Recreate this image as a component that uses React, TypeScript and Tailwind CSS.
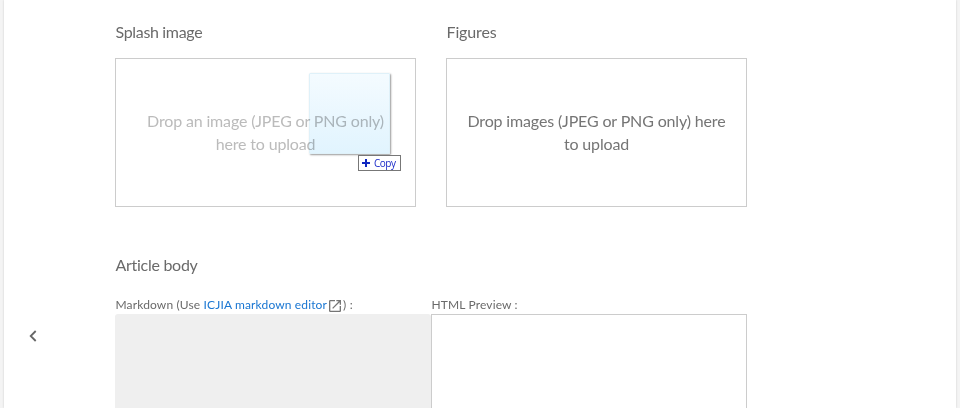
export default function App() {
  return (
    <div className="h-[408px] w-[960px] overflow-hidden bg-[#f4f4f4] pl-[4px] pr-[4px] font-['Lato',sans-serif] text-[#6a6a6a]">
      <div className="flex h-full bg-white shadow-[0_0_2px_#ccc]">
        <div className="flex w-[111px] shrink-0 pl-[25px] pt-[330px]">
          <svg width="8" height="12" viewBox="0 0 8 12" fill="none" stroke="#666" strokeWidth="1.8"><path d="M6.7 1 1.7 6l5 5" /></svg>
        </div>
        <main className="w-[632px] shrink-0">
          <div className="grid grid-cols-[301px_301px] gap-[30px]">
            <section>
              <h2 className="h-[58px] pl-[0.5px] pt-[20px] text-[16px] leading-[24px] tracking-[-0.33px]">Splash image</h2>
              <div className="relative flex h-[149px] items-center justify-center border border-[#ccc] pb-[2px] text-center text-[16px] leading-[23px] tracking-[-0.16px] text-[#bbb]">
                <p>Drop an image (JPEG or PNG only)<br />here to upload</p>
                <div className="absolute left-[193px] top-[14px] h-[81px] w-[81px] rounded-[1px] border border-[#dff1f9] bg-linear-to-b from-[#f4fbff] to-[#e1f4fe] mix-blend-multiply shadow-[1px_1px_2px_#999]" />
                <div className="absolute left-[242px] top-[96px] flex h-[16px] w-[43px] items-center border border-[#777] bg-white pl-[3px] font-['Open_Sans',sans-serif] text-[10px] leading-none tracking-[-0.5px] text-[#1a2ac8]">
                  <svg width="8" height="8" viewBox="0 0 8 8" className="mr-[4px]"><path d="M4 0v8M0 4h8" stroke="#1028c0" strokeWidth="2" /></svg>Copy
                </div>
              </div>
            </section>
            <section>
              <h2 className="h-[58px] pl-[0.5px] pt-[20px] text-[16px] leading-[24px] tracking-[-0.12px]">Figures</h2>
              <div className="flex h-[149px] items-center justify-center border border-[#ccc] pb-[2px] text-center text-[16px] leading-[23px] tracking-[-0.15px] text-[#757575]">
                <p>Drop images (JPEG or PNG only) here<br />to upload</p>
              </div>
            </section>
          </div>
          <h2 className="mt-[46px] pl-[0.5px] text-[16px] leading-[24px] tracking-[-0.28px]">Article body</h2>
          <div className="mt-[17px] grid grid-cols-2">
            <section>
              <div className="flex h-[20px] items-center pl-[0.5px] pt-[2px] text-[12px] tracking-[0.14px]">Markdown (Use&nbsp;<a className="text-[#1976d2]">ICJIA markdown editor</a>
                <svg width="16" height="16" viewBox="0 0 24 24" fill="#757575" className="mt-[1px]"><path d="M19 19H5V5h7V3H5a2 2 0 0 0-2 2v14a2 2 0 0 0 2 2h14c1.1 0 2-.9 2-2v-7h-2v7zM14 3v2h3.59l-9.83 9.83 1.41 1.41L19 6.41V10h2V3h-7z" /></svg>) :
              </div>
              <div className="h-[100px] rounded-t-[3px] bg-[#efefef]" />
            </section>
            <section>
              <div className="flex h-[20px] items-center pl-[0.5px] pt-[2px] text-[12px] tracking-[0.14px]">HTML Preview :</div>
              <div className="h-[100px] border border-[#ccc]" />
            </section>
          </div>
        </main>
      </div>
    </div>
  );
}
